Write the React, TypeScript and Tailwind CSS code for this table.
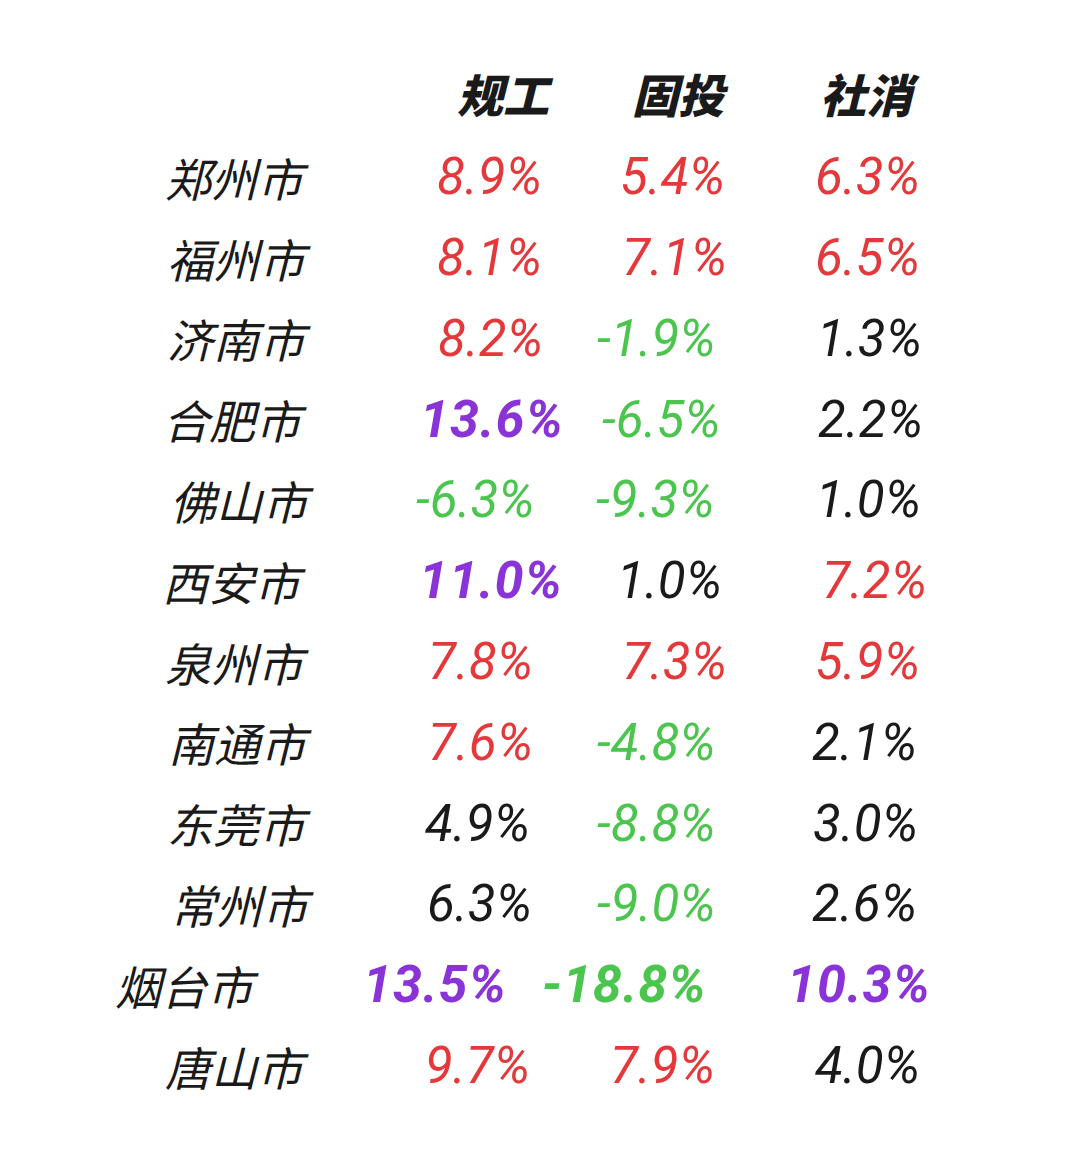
type Tone = 'red' | 'green' | 'purple' | 'black';

interface Cell {
  v: string;
  tone: Tone;
  bold?: boolean;
  pad: string;
}

interface Row {
  city: string;
  cityPad: string;
  cells: Cell[];
}

const toneClass: Record<Tone, string> = {
  red: 'text-[#e5383b]',
  green: 'text-[#4cc54f]',
  purple: 'text-[#8a33d6]',
  black: 'text-[#1a1a1a]',
};

const rows: Row[] = [
  { city: '郑州市', cityPad: 'pl-[165px]', cells: [
    { v: '8.9%', tone: 'red', pad: 'pl-[77px]' },
    { v: '5.4%', tone: 'red', pad: 'pl-[80px]' },
    { v: '6.3%', tone: 'red', pad: 'pl-[55px]' },
  ] },
  { city: '福州市', cityPad: 'pl-[167px]', cells: [
    { v: '8.1%', tone: 'red', pad: 'pl-[77px]' },
    { v: '7.1%', tone: 'red', pad: 'pl-[82px]' },
    { v: '6.5%', tone: 'red', pad: 'pl-[55px]' },
  ] },
  { city: '济南市', cityPad: 'pl-[167px]', cells: [
    { v: '8.2%', tone: 'red', pad: 'pl-[78px]' },
    { v: '-1.9%', tone: 'green', pad: 'pl-[57px]' },
    { v: '1.3%', tone: 'black', pad: 'pl-[57px]' },
  ] },
  { city: '合肥市', cityPad: 'pl-[163px]', cells: [
    { v: '13.6%', tone: 'purple', bold: true, pad: 'pl-[60px]' },
    { v: '-6.5%', tone: 'green', pad: 'pl-[62px]' },
    { v: '2.2%', tone: 'black', pad: 'pl-[58px]' },
  ] },
  { city: '佛山市', cityPad: 'pl-[170px]', cells: [
    { v: '-6.3%', tone: 'green', pad: 'pl-[56px]' },
    { v: '-9.3%', tone: 'green', pad: 'pl-[56px]' },
    { v: '1.0%', tone: 'black', pad: 'pl-[56px]' },
  ] },
  { city: '西安市', cityPad: 'pl-[162px]', cells: [
    { v: '11.0%', tone: 'purple', bold: true, pad: 'pl-[59px]' },
    { v: '1.0%', tone: 'black', pad: 'pl-[77px]' },
    { v: '7.2%', tone: 'red', pad: 'pl-[62px]' },
  ] },
  { city: '泉州市', cityPad: 'pl-[165px]', cells: [
    { v: '7.8%', tone: 'red', pad: 'pl-[68px]' },
    { v: '7.3%', tone: 'red', pad: 'pl-[82px]' },
    { v: '5.9%', tone: 'red', pad: 'pl-[55px]' },
  ] },
  { city: '南通市', cityPad: 'pl-[168px]', cells: [
    { v: '7.6%', tone: 'red', pad: 'pl-[68px]' },
    { v: '-4.8%', tone: 'green', pad: 'pl-[57px]' },
    { v: '2.1%', tone: 'black', pad: 'pl-[52px]' },
  ] },
  { city: '东莞市', cityPad: 'pl-[167px]', cells: [
    { v: '4.9%', tone: 'black', pad: 'pl-[65px]' },
    { v: '-8.8%', tone: 'green', pad: 'pl-[57px]' },
    { v: '3.0%', tone: 'black', pad: 'pl-[53px]' },
  ] },
  { city: '常州市', cityPad: 'pl-[170px]', cells: [
    { v: '6.3%', tone: 'black', pad: 'pl-[67px]' },
    { v: '-9.0%', tone: 'green', pad: 'pl-[57px]' },
    { v: '2.6%', tone: 'black', pad: 'pl-[52px]' },
  ] },
  { city: '烟台市', cityPad: 'pl-[115px]', cells: [
    { v: '13.5%', tone: 'purple', bold: true, pad: 'pl-[3px]' },
    { v: '-18.8%', tone: 'green', bold: true, pad: 'pl-[2px]' },
    { v: '10.3%', tone: 'purple', bold: true, pad: 'pl-[27px]' },
  ] },
  { city: '唐山市', cityPad: 'pl-[165px]', cells: [
    { v: '9.7%', tone: 'red', pad: 'pl-[65px]' },
    { v: '7.9%', tone: 'red', pad: 'pl-[70px]' },
    { v: '4.0%', tone: 'black', pad: 'pl-[55px]' },
  ] },
];

const cjk = "font-['Noto_Sans_CJK_SC','Noto_Sans',sans-serif]";
const num = "font-['Roboto','Noto_Sans','Noto_Sans_CJK_SC',sans-serif]";
const colW = ['w-[360px]', 'w-[180px]', 'w-[220px]', 'w-[320px]'];

export default function App() {
  return (
    <div className="w-[1080px] h-[1159px] bg-white pt-[50px] italic">
      {/* header */}
      <div className={`flex items-center h-[87px] ${cjk} text-[46px] font-black text-[#1a1a1a]`}>
        <div className={colW[0]} />
        <div className={`${colW[1]} pl-[97px] whitespace-nowrap`}>规工</div>
        <div className={`${colW[2]} pl-[92px] whitespace-nowrap`}>固投</div>
        <div className={`${colW[3]} pl-[60px] whitespace-nowrap`}>社消</div>
      </div>

      {rows.map((r) => (
        <div key={r.city} className="flex items-center h-[80.8px]">
          <div className={`${colW[0]} ${r.cityPad} ${cjk} text-[46px] font-normal text-[#1a1a1a] whitespace-nowrap`}>
            {r.city}
          </div>
          {r.cells.map((c, i) => (
            <div
              key={i}
              className={`${colW[i + 1]} ${c.pad} ${num} whitespace-nowrap ${toneClass[c.tone]} ${c.bold ? 'text-[52px] font-bold tracking-[1px]' : 'text-[51px] font-normal'}`}
            >
              {c.v}
            </div>
          ))}
        </div>
      ))}
    </div>
  );
}
